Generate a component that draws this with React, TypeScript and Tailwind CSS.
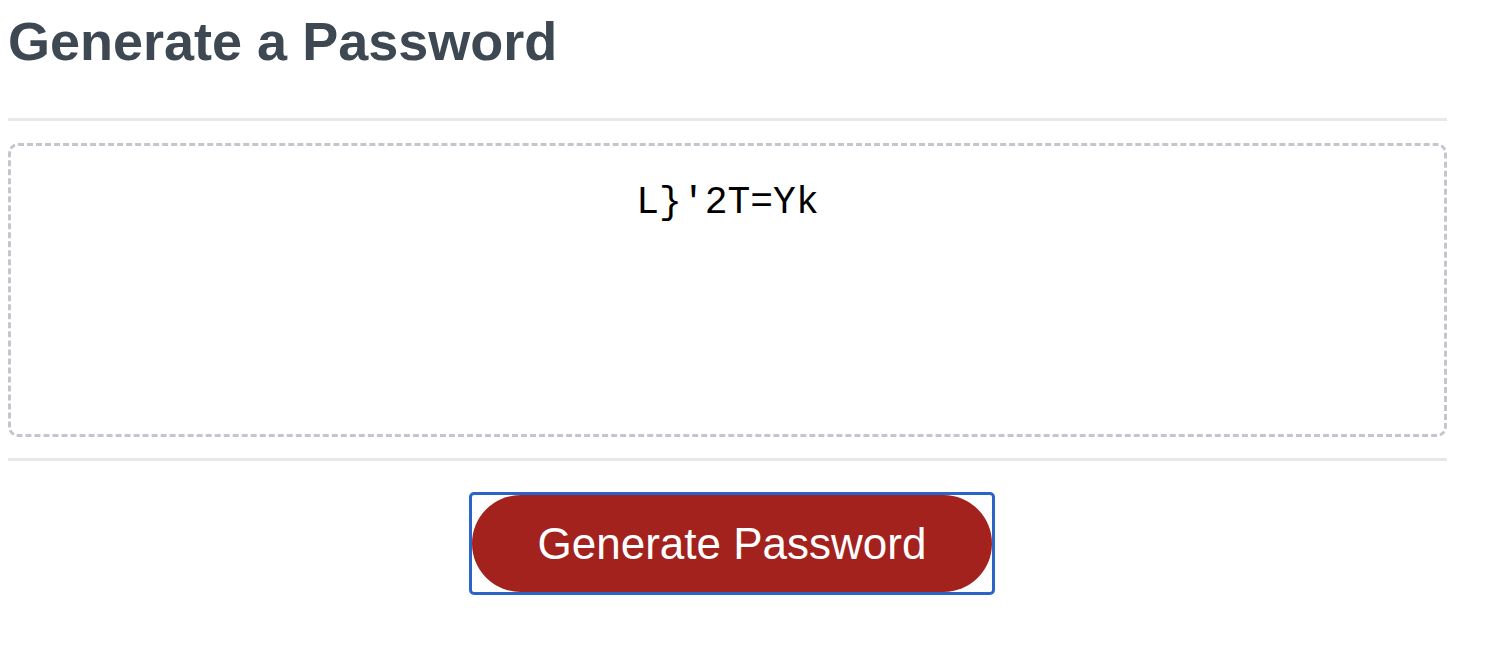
export default function App() {
  return (
    <div className="bg-white min-h-screen pl-2 pt-[14px]" style={{ width: 1492 }}>
      <div className="w-[1439px]">
        <h1 className="text-[54px] leading-none font-bold text-[#3d4853] font-['Liberation_Sans',Arial,sans-serif]">
          Generate a Password
        </h1>
        <div className="mt-[50px] h-[3px] bg-[#e7e8e9]" />
        <div className="mt-[22px] h-[294px] border-[3px] border-dashed border-[#c3c7cd] rounded-[10px] flex justify-center pt-[38px]">
          <span className="text-[38px] leading-none text-black font-['Courier_New','Liberation_Mono',monospace]">
            L{"}"}'2T=Yk
          </span>
        </div>
        <div className="mt-[21px] h-[3px] bg-[#e7e8e9]" />
        <div className="mt-[31px] flex justify-center pl-[9px]">
          <div className="border-[3px] border-[#2a64c8] rounded-[5px] bg-white">
            <button className="w-[520px] h-[97px] rounded-full bg-[#a3221d] text-white text-[44px] font-['Liberation_Sans',Arial,sans-serif] flex items-center justify-center">
              Generate Password
            </button>
          </div>
        </div>
      </div>
    </div>
  );
}
